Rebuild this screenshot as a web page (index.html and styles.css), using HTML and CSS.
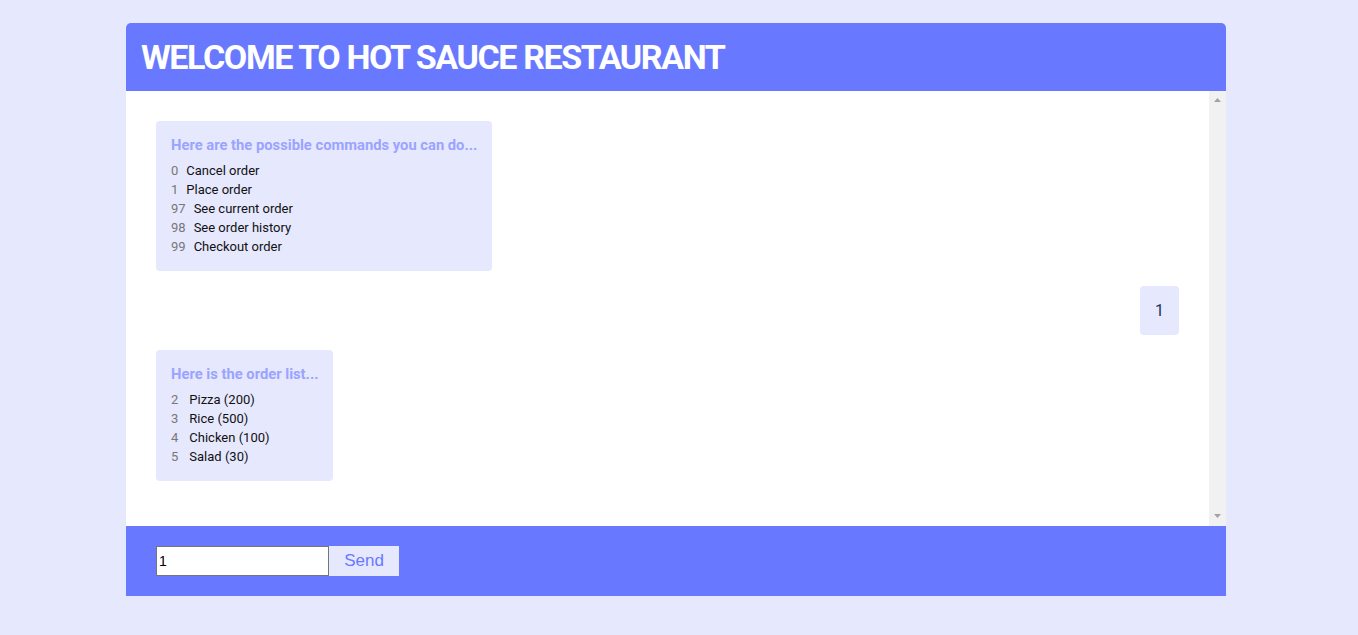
FILE: index.html
```html
<!DOCTYPE html>
<html>
<head>
<meta charset="utf-8">
<title>Hot Sauce Restaurant</title>
<link rel="stylesheet" href="styles.css">
</head>
<body>
<div class="app">
  <header class="app-header">
    <h1 class="title">WELCOME TO HOT SAUCE RESTAURANT</h1>
  </header>
  <div class="chat">
    <main class="chat-body">
      <div class="msg bot">
        <div class="msg-title">Here are the possible commands you can do...</div>
        <ul class="opts">
          <li><span class="num">0</span>Cancel order</li>
          <li><span class="num">1</span>Place order</li>
          <li><span class="num">97</span>See current order</li>
          <li><span class="num">98</span>See order history</li>
          <li><span class="num">99</span>Checkout order</li>
        </ul>
      </div>
      <div class="msg user">1</div>
      <div class="msg bot">
        <div class="msg-title">Here is the order list...</div>
        <ul class="opts menu">
          <li><span class="num">2</span>Pizza (200)</li>
          <li><span class="num">3</span>Rice (500)</li>
          <li><span class="num">4</span>Chicken (100)</li>
          <li><span class="num">5</span>Salad (30)</li>
        </ul>
      </div>
    </main>
    <div class="scrollbar" aria-hidden="true">
      <svg class="sb-btn" width="17" height="17" viewBox="0 0 17 17"><polygon points="5,11 12,11 8.5,7" fill="#a3a3a3"/></svg>
      <svg class="sb-btn" width="17" height="17" viewBox="0 0 17 17"><polygon points="5,5 12,5 8.5,9" fill="#a3a3a3"/></svg>
    </div>
  </div>
  <footer class="composer">
    <input class="field" type="text" value="1">
    <button class="send">Send</button>
  </footer>
</div>
</body>
</html>
```
FILE: styles.css
```css
html, body {
  margin: 0;
  padding: 0;
}
body {
  background: #e6e8fe;
  font-family: Roboto, "Noto Sans", sans-serif;
  padding: 23px 6px 0 0;
}
.app {
  width: 1100px;
  margin: 0 auto;
}
.app-header {
  background: #6979ff;
  height: 68px;
  border-radius: 5px 5px 0 0;
  display: flex;
  align-items: center;
  padding: 0 15px;
}
.title {
  margin: 0;
  color: #fff;
  font-family: Roboto, sans-serif;
  font-weight: 700;
  font-size: 34px;
  letter-spacing: -1.4px;
  line-height: 40px;
}
.chat {
  background: #fff;
  height: 435px;
  display: flex;
  overflow: hidden;
}
.chat-body {
  flex: 1;
  box-sizing: border-box;
  padding: 30px;
  display: flex;
  flex-direction: column;
  align-items: flex-start;
  gap: 15px;
}
.scrollbar {
  width: 17px;
  flex: none;
  background: #f1f1f1;
  display: flex;
  flex-direction: column;
  justify-content: space-between;
}
.sb-btn {
  display: block;
}
.msg {
  background: #e6e8fe;
  border-radius: 4px;
  padding: 15px;
}
.msg.user {
  align-self: flex-end;
  font-size: 16px;
  line-height: 19px;
  color: #1d3557;
}
.msg-title {
  color: #9aa4ff;
  font-weight: 700;
  font-size: 14.75px;
  line-height: 19px;
  margin-bottom: 6px;
}
.opts {
  list-style: none;
  margin: 0;
  padding: 0;
  font-size: 13px;
  line-height: 19px;
  color: #111;
}
.num {
  color: #777;
  margin-right: 8px;
}
.menu .num {
  margin-right: 11px;
}
.composer {
  background: #6979ff;
  height: 70px;
  box-sizing: border-box;
  padding: 20px 30px;
  display: flex;
}
.field {
  width: 173px;
  height: 30px;
  box-sizing: border-box;
  margin: 0;
  border: 1px solid #767676;
  padding: 1px 2px;
  font-family: Arial, "Liberation Sans", sans-serif;
  font-size: 14px;
  background: #fff;
  color: #000;
}
.send {
  width: 70px;
  height: 30px;
  margin: 0;
  border: none;
  background: #e6e8fe;
  color: #6979ff;
  font-family: Arial, "Liberation Sans", sans-serif;
  font-size: 17px;
  padding: 0;
}
```
